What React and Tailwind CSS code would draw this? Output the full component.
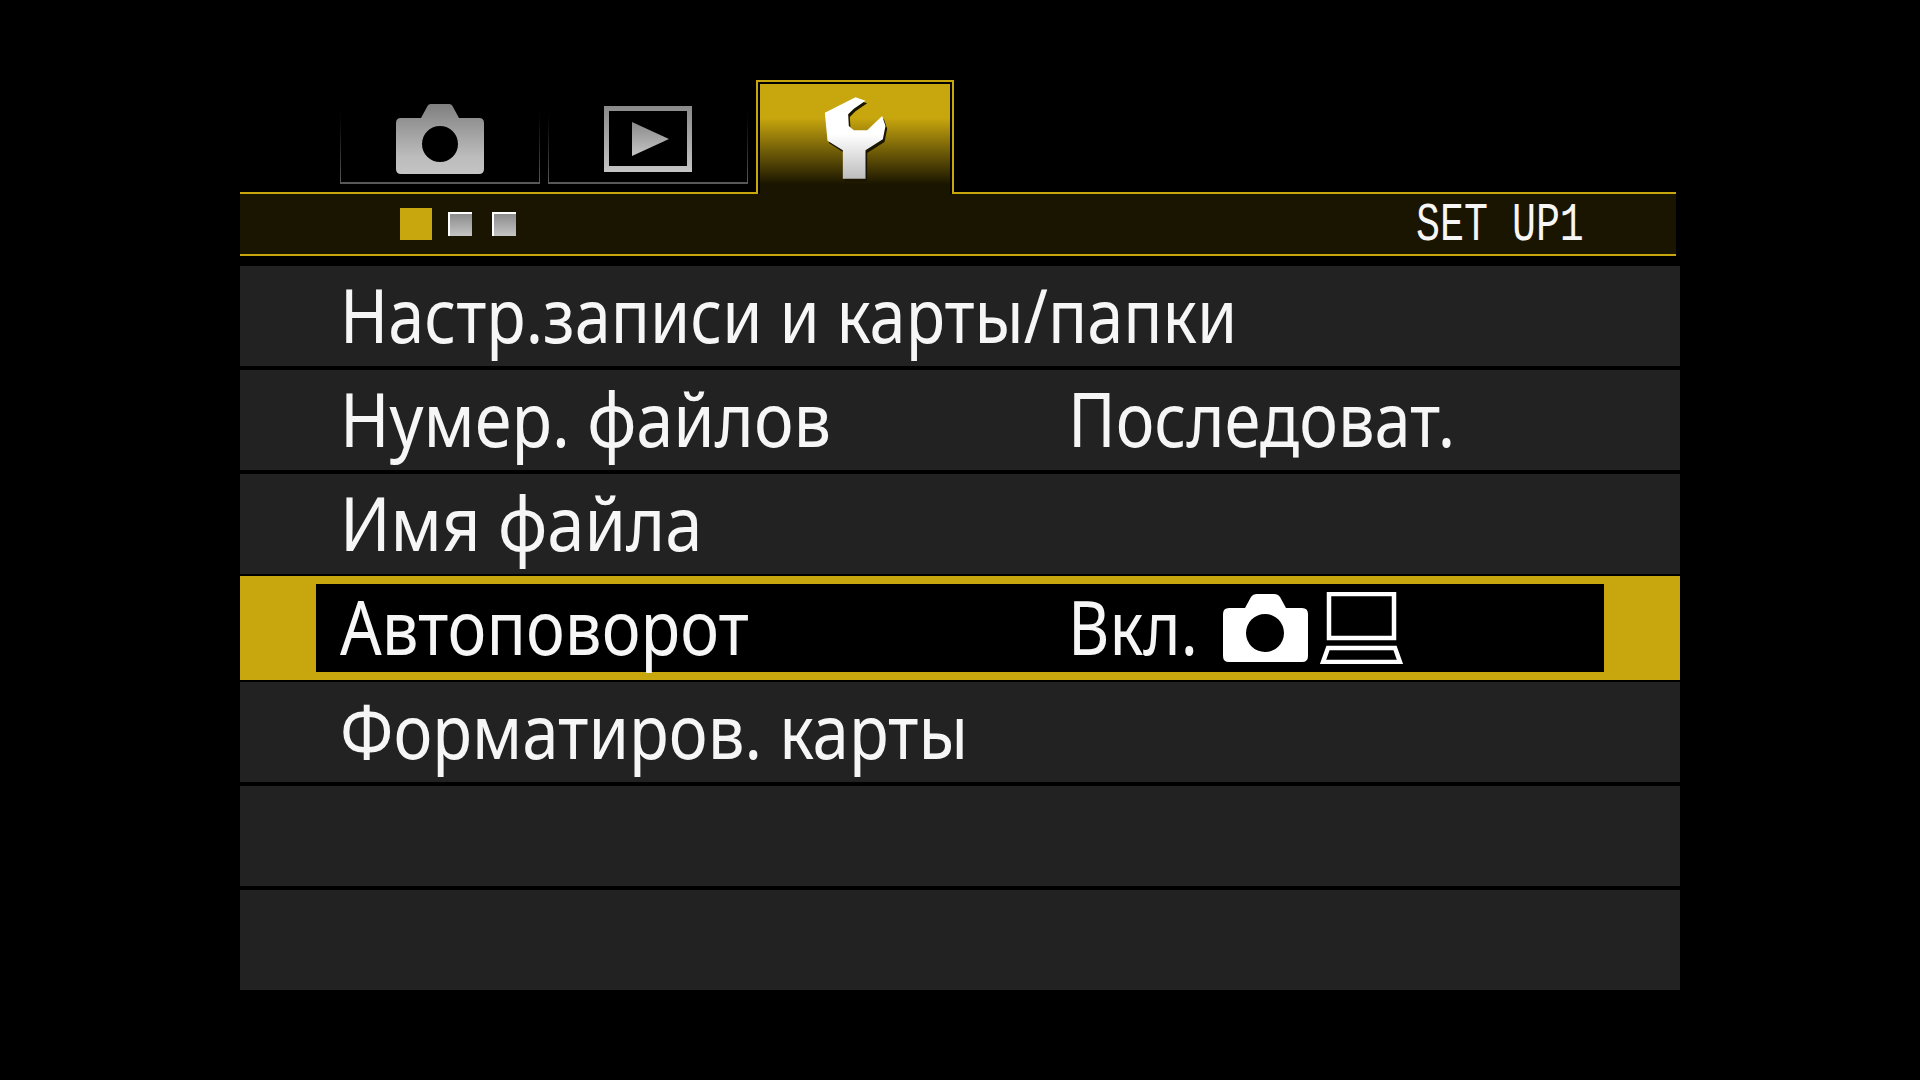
function TabCamera() {
  return (
    <svg width="88" height="70" viewBox="0 0 88 70">
      <defs>
        <linearGradient id="tabCam" x1="0" y1="0" x2="0" y2="1">
          <stop offset="0" stopColor="#808080" />
          <stop offset="0.75" stopColor="#bcbcbc" />
          <stop offset="1" stopColor="#c4c4c4" />
        </linearGradient>
      </defs>
      <path
        fillRule="evenodd"
        fill="url(#tabCam)"
        d="M35 0h18q3 0 4 3l6 11h20q5 0 5 5v46q0 5-5 5H5q-5 0-5-5V19q0-5 5-5h20l6-11q1-3 4-3ZM44 22a18 18 0 1 0 0 36a18 18 0 1 0 0-36Z"
      />
    </svg>
  );
}

function TabPlay() {
  return (
    <svg width="88" height="66" viewBox="0 0 88 66">
      <defs>
        <linearGradient id="tabPlay" x1="0" y1="0" x2="0" y2="1">
          <stop offset="0" stopColor="#8a8a8a" />
          <stop offset="1" stopColor="#c4c4c4" />
        </linearGradient>
      </defs>
      <path fillRule="evenodd" fill="url(#tabPlay)" d="M0 0h88v66H0ZM5 5v55h78V5Z" />
      <path fill="url(#tabPlay)" d="M28 16l37 17-37 17Z" />
    </svg>
  );
}

function Wrench() {
  const d = 'M350 84L380 94L345 118L328 135L330 170L345 183L385 183L430 140L440 170L432 210L380 243L380 328L312 328L312 243L266 214L258 130Z';
  return (
    <svg width="67" height="88" viewBox="250 80 200 264">
      <defs>
        <linearGradient id="wrenchFill" x1="0" y1="0" x2="0" y2="1">
          <stop offset="0" stopColor="#ffffff" />
          <stop offset="0.45" stopColor="#ffffff" />
          <stop offset="1" stopColor="#bdbdbd" />
        </linearGradient>
      </defs>
      <path d={d} fill="#1a1500" transform="translate(5 8)" />
      <path d={d} fill="url(#wrenchFill)" />
    </svg>
  );
}

function CameraGlyph() {
  return (
    <svg width="85" height="68" viewBox="0 0 85 68">
      <path
        fillRule="evenodd"
        fill="#fff"
        d="M34 0h17q4 0 6 3l6 11h16q6 0 6 6v42q0 6-6 6H6q-6 0-6-6V20q0-6 6-6h16l6-11q2-3 6-3ZM42 20a19 19 0 1 0 0 38a19 19 0 1 0 0-38Z"
      />
    </svg>
  );
}

function LaptopGlyph() {
  return (
    <svg width="83" height="72" viewBox="0 0 83 72">
      <rect x="9" y="2" width="65" height="44" fill="none" stroke="#fff" strokeWidth="4.5" />
      <path d="M8 56h67l5 14H3Z" fill="none" stroke="#fff" strokeWidth="4.5" />
    </svg>
  );
}

function DimTab({ children }) {
  return (
    <div className="mt-[17px] h-[87px] w-[200px] bg-gradient-to-b from-black to-[#5a5a5a] px-[1px] pb-[2px]">
      <div className="flex h-full items-start justify-center bg-black pt-[7px]">{children}</div>
    </div>
  );
}

function Row({ label, labelClass, value, valueClass, selected }) {
  const text = (
    <div className="flex items-center pb-[3px]">
      <span className={`w-[730px] shrink-0 origin-left whitespace-nowrap ${labelClass}`}>{label}</span>
      {value && <span className={`-ml-[2px] origin-left whitespace-nowrap ${valueClass}`}>{value}</span>}
    </div>
  );
  if (selected) {
    return (
      <div className="-my-[2px] h-[104px] bg-[#c8a60e] px-[76px] py-[8px]">
        <div className="relative flex h-[88px] items-center bg-black pl-[24px]">
          {text}
          <div className="absolute left-[907px] top-[8px] flex items-start">
            <div className="mt-[2px]"><CameraGlyph /></div>
            <div className="ml-[12px]"><LaptopGlyph /></div>
          </div>
        </div>
      </div>
    );
  }
  return <div className="flex h-[100px] items-center bg-[#222222] pl-[100px]">{text}</div>;
}

export default function App() {
  return (
    <div className="h-[1080px] w-full overflow-hidden bg-black pl-[240px] pt-[80px] font-['Noto_Sans',sans-serif] text-[#f6f6f6]">
      <div className="w-[1440px]">
        {/* Tabs */}
        <div className="flex h-[112px] gap-[8px] pl-[100px]">
          <DimTab><TabCamera /></DimTab>
          <DimTab><div className="pt-[2px]"><TabPlay /></div></DimTab>
          <div className="relative z-10 h-[114px] w-[198px] border-x-2 border-t-2 border-[#c8a60e] bg-black px-[2px] pt-[2px]">
            <div className="flex h-full justify-center bg-[linear-gradient(to_bottom,#c8a60e_0,#c8a60e_34px,#1a1500_100px)] pt-[12px]">
              <Wrench />
            </div>
          </div>
        </div>

        {/* Page strip */}
        <div className="flex h-[64px] w-[1436px] items-center justify-between border-y-2 border-[#c8a60e] bg-[#1a1500] pl-[160px] pr-[92px]">
          <div className="flex items-center">
            <div className="h-[32px] w-[32px] bg-[#c8a60e]" />
            <div className="ml-[16px] h-[24px] w-[24px] border-l-2 border-t-2 border-white bg-gradient-to-b from-[#8c8c8c] to-[#c4c4c4]" />
            <div className="ml-[20px] h-[24px] w-[24px] border-l-2 border-t-2 border-white bg-gradient-to-b from-[#8c8c8c] to-[#c4c4c4]" />
          </div>
          <span className="origin-right scale-x-[0.74] whitespace-nowrap pt-[4px] font-['Liberation_Mono',monospace] text-[54px] leading-none">SET UP1</span>
        </div>

        {/* Menu rows */}
        <div className="mt-[10px] flex flex-col gap-[4px] text-[74px] leading-none">
          <Row label="Настр.записи и карты/папки" labelClass="scale-x-[0.876]" />
          <Row label="Нумер. файлов" labelClass="scale-x-[0.901]" value="Последоват." valueClass="scale-x-[0.879]" />
          <Row label="Имя файла" labelClass="scale-x-[0.904]" />
          <Row label="Автоповорот" labelClass="scale-x-[0.883]" value="Вкл." valueClass="scale-x-[0.862]" selected />
          <Row label="Форматиров. карты" labelClass="scale-x-[0.884]" />
          <Row />
          <Row />
        </div>
      </div>
    </div>
  );
}
